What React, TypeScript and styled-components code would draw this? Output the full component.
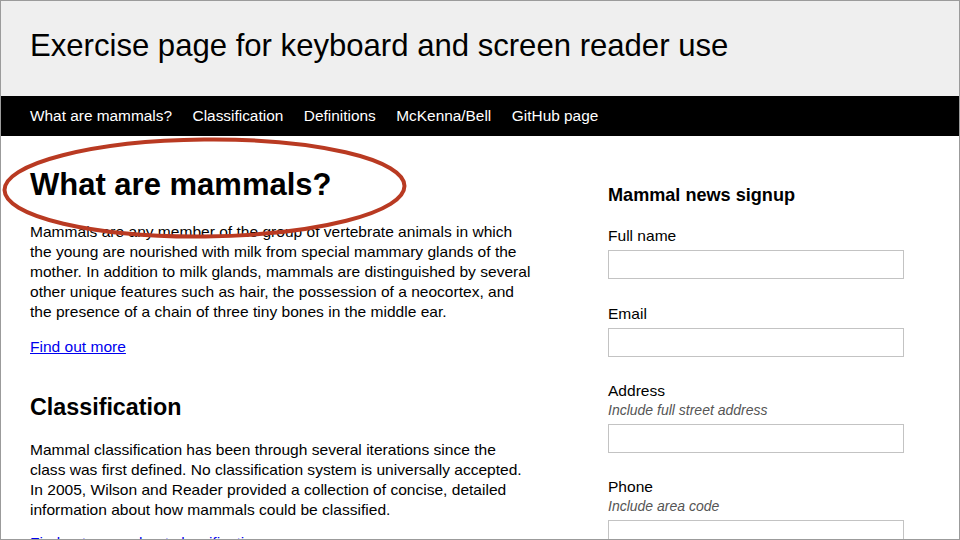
import styled, { createGlobalStyle } from 'styled-components';

const GlobalStyle = createGlobalStyle`
  html, body {
    margin: 0;
    padding: 0;
    width: 960px;
    height: 540px;
    overflow: hidden;
    background: #ffffff;
  }
  body {
    font-family: 'Liberation Sans', Arial, sans-serif;
    color: #000;
  }
`;

const navLinks = ['What are mammals?', 'Classification', 'Definitions', 'McKenna/Bell', 'GitHub page'];

interface FieldProps {
  label: string;
  hint?: string;
}

const Field = ({ label, hint }: FieldProps) => (
  <FieldWrapper>
    <Label>{label}</Label>
    {hint && <Hint>{hint}</Hint>}
    <Input type="text" />
  </FieldWrapper>
);

const App = () => {
  return (
    <Frame>
      <GlobalStyle />
      <Header>
        <Title>Exercise page for keyboard and screen reader use</Title>
      </Header>
      <Nav>
        {navLinks.map((item) => (
          <NavLink key={item}>{item}</NavLink>
        ))}
      </Nav>
      <Main>
        <Article>
          <PageHeading>What are mammals?</PageHeading>
          <Paragraph>
            Mammals are any member of the group of vertebrate animals in which the young are nourished with
            milk from special mammary glands of the mother. In addition to milk glands, mammals are
            distinguished by several other unique features such as hair, the possession of a neocortex, and
            the presence of a chain of three tiny bones in the middle ear.
          </Paragraph>
          <Paragraph>
            <TextLink>Find out more</TextLink>
          </Paragraph>
          <SectionHeading>Classification</SectionHeading>
          <Paragraph $tight>
            Mammal classification has been through several iterations since the class was first defined. No
            classification system is universally accepted. In 2005, Wilson and Reader provided a collection
            of concise, detailed information about how mammals could be classified.
          </Paragraph>
          <Paragraph>
            <TextLink>Find out more about classification</TextLink>
          </Paragraph>
        </Article>
        <Sidebar>
          <SidebarTitle>Mammal news signup</SidebarTitle>
          <Field label="Full name" />
          <Field label="Email" />
          <Field label="Address" hint="Include full street address" />
          <Field label="Phone" hint="Include area code" />
        </Sidebar>
      </Main>
      <Annotation width="420" height="120" viewBox="0 0 420 120">
        <ellipse
          cx="203.5"
          cy="57"
          rx="200"
          ry="48.5"
          fill="none"
          stroke="#b93a22"
          strokeWidth="4"
          transform="rotate(-0.6 203.5 57)"
        />
      </Annotation>
    </Frame>
  );
};

export default App;

const Frame = styled.div`
  position: relative;
  width: 960px;
  height: 540px;
  box-sizing: border-box;
  border: 1px solid #9b9b9b;
  overflow: hidden;
  background: #fff;
`;

const Header = styled.header`
  height: 95px;
  box-sizing: border-box;
  padding: 28px 0 0 29px;
  background: #efefef;
`;

const Title = styled.h1`
  margin: 0;
  font-size: 31.1px;
  line-height: 34px;
  font-weight: normal;
`;

const Nav = styled.nav`
  height: 40px;
  display: flex;
  align-items: center;
  gap: 20.6px;
  padding-left: 29px;
  background: #000;
`;

const NavLink = styled.a`
  color: #fff;
  font-size: 15.4px;
  text-decoration: none;
`;

const Main = styled.main`
  display: flex;
  align-items: flex-start;
  gap: 76px;
  padding-left: 29px;
`;

const Article = styled.section`
  width: 502px;
  padding-top: 31.7px;
`;

const PageHeading = styled.h2`
  margin: 0 0 20px;
  font-size: 31px;
  line-height: 34.3px;
  font-weight: bold;
`;

const SectionHeading = styled.h2`
  margin: 38px 0 19.3px;
  font-size: 23.3px;
  line-height: 25.7px;
  font-weight: bold;
`;

const Paragraph = styled.p<{ $tight?: boolean }>`
  margin: 0 0 ${(p) => (p.$tight ? '13px' : '15.5px')};
  font-size: 15.55px;
  line-height: 20px;
`;

const TextLink = styled.a`
  color: #0000ee;
  text-decoration: underline;
`;

const Sidebar = styled.aside`
  width: 296px;
  padding-top: 49px;
`;

const SidebarTitle = styled.h3`
  margin: 0 0 20.6px;
  font-size: 18.1px;
  line-height: 20.1px;
  font-weight: bold;
`;

const FieldWrapper = styled.div`
  display: flex;
  flex-direction: column;
  margin-bottom: 24.5px;
`;

const Label = styled.label`
  font-size: 15.55px;
  line-height: 20px;
`;

const Hint = styled.span`
  font-size: 14px;
  line-height: 18px;
  font-style: italic;
  color: #555;
`;

const Input = styled.input`
  margin-top: 4.4px;
  width: 296px;
  height: 29px;
  box-sizing: border-box;
  border: 1px solid #c3c3c3;
  padding: 0 6px;
  font-size: 15px;
  background: #fff;
  outline: none;
`;

const Annotation = styled.svg`
  position: absolute;
  left: 0;
  top: 130px;
  pointer-events: none;
`;
